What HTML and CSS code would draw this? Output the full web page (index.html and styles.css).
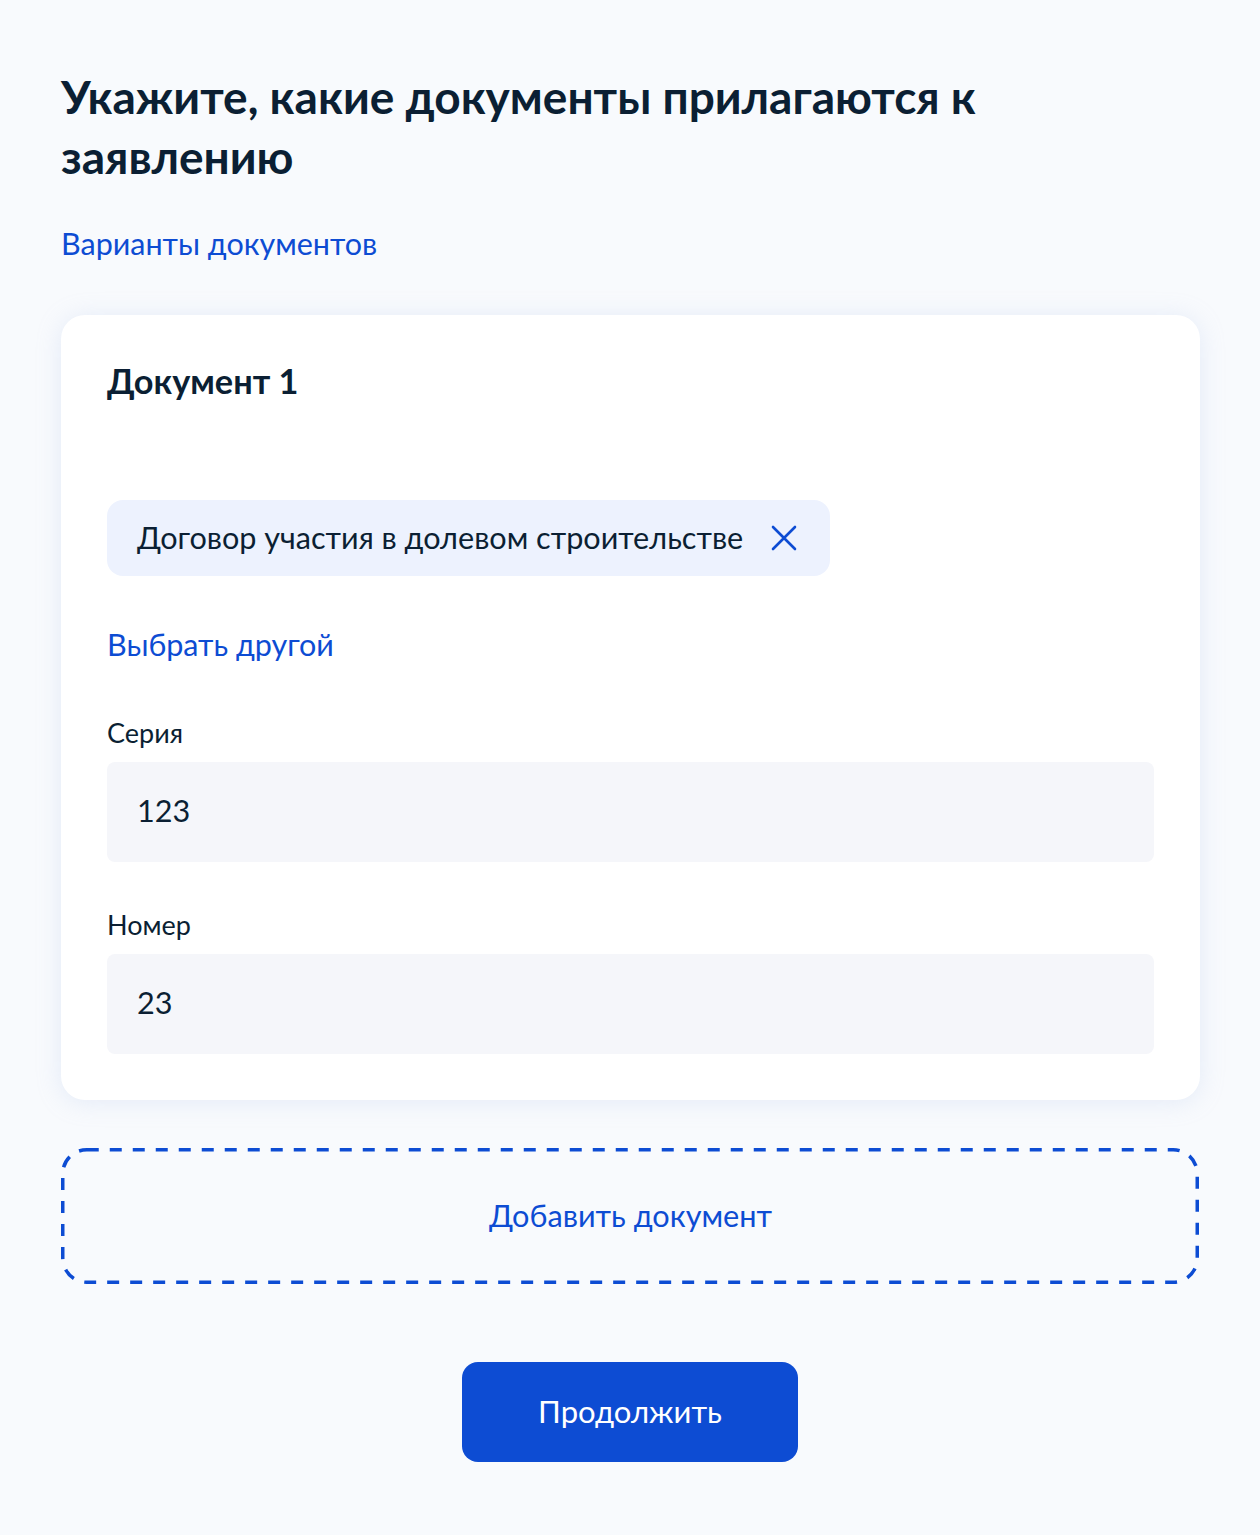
FILE: index.html
```html
<!DOCTYPE html>
<html lang="ru">
<head>
<meta charset="utf-8">
<link rel="stylesheet" href="styles.css">
</head>
<body>
<main class="page">
  <h1 class="title">Укажите, какие документы прилагаются к заявлению</h1>
  <a class="link variants">Варианты документов</a>
  <section class="card">
    <h2 class="card-title">Документ 1</h2>
    <div class="chip">
      <span class="chip-text">Договор участия в долевом строительстве</span>
      <svg class="chip-x" width="26" height="26" viewBox="0 0 26 26"><path d="M2 2L24 24M24 2L2 24" stroke="#0d4cd3" stroke-width="2.6" stroke-linecap="round" fill="none"/></svg>
    </div>
    <a class="link other">Выбрать другой</a>
    <div class="field">
      <div class="label">Серия</div>
      <div class="input">123</div>
    </div>
    <div class="field">
      <div class="label">Номер</div>
      <div class="input">23</div>
    </div>
  </section>
  <div class="add">
    <svg class="add-border" width="1138" height="136" viewBox="0 0 1138 136"><rect x="1.75" y="1.75" width="1134.5" height="132.5" rx="24" ry="24" fill="none" stroke="#0d4cd3" stroke-width="3.5" stroke-dasharray="12 11"/></svg>
    <span class="add-text">Добавить документ</span>
  </div>
  <div class="actions"><button class="btn">Продолжить</button></div>
</main>
</body>
</html>
```
FILE: styles.css
```css
* { box-sizing: border-box; }
html, body { margin: 0; }
body {
  background: #f8fafd;
  font-family: Lato, "Noto Sans", sans-serif;
  color: #0b1f33;
  width: 1260px;
  height: 1535px;
}
.page {
  padding: 67px 60px 0 61px;
  width: 1260px;
}
.title {
  margin: 0;
  font-size: 46px;
  line-height: 60px;
  font-weight: 700;
  width: 1000px;
}
.link {
  color: #0d4cd3;
  font-size: 30.5px;
  line-height: 40px;
  display: block;
}
.variants { margin-top: 36px; }
.card {
  margin-top: 52px;
  background: #fff;
  border-radius: 24px;
  box-shadow: 0 2px 24px rgba(170, 190, 230, 0.25);
  padding: 44px 46px 46px;
}
.card-title {
  margin: 0;
  font-size: 34.3px;
  line-height: 44px;
  font-weight: 700;
}
.chip {
  margin-top: 97px;
  display: inline-flex;
  align-items: center;
  height: 76px;
  padding: 0 33px 0 30px;
  background: #edf2fe;
  border-radius: 16px;
  gap: 28px;
}
.chip-text { font-size: 30.6px; line-height: 40px; }
.other { margin-top: 48px; }
.field { margin-top: 51px; }
.field + .field { margin-top: 45px; }
.label { font-size: 27px; line-height: 36px; }
.input {
  margin-top: 11px;
  height: 100px;
  background: #f5f6fa;
  border-radius: 8px;
  padding: 0 30px 3px;
  display: flex;
  align-items: center;
  font-size: 30.6px;
}
.add {
  position: relative;
  margin-top: 48px;
  height: 136px;
  display: flex;
  align-items: center;
  justify-content: center;
  color: #0d4cd3;
  font-size: 30.7px;
  padding-bottom: 2px;
}
.add-border {
  position: absolute;
  left: 0;
  top: 0;
}
.add-text { position: relative; }
.actions {
  margin-top: 78px;
  display: flex;
  justify-content: center;
  padding-right: 1px;
}
.btn {
  width: 336px;
  height: 100px;
  border: 0;
  border-radius: 16px;
  background: #0d4cd3;
  color: #fff;
  font-family: Lato, "Noto Sans", sans-serif;
  font-size: 31px;
  padding: 0 0 3px;
}
```
